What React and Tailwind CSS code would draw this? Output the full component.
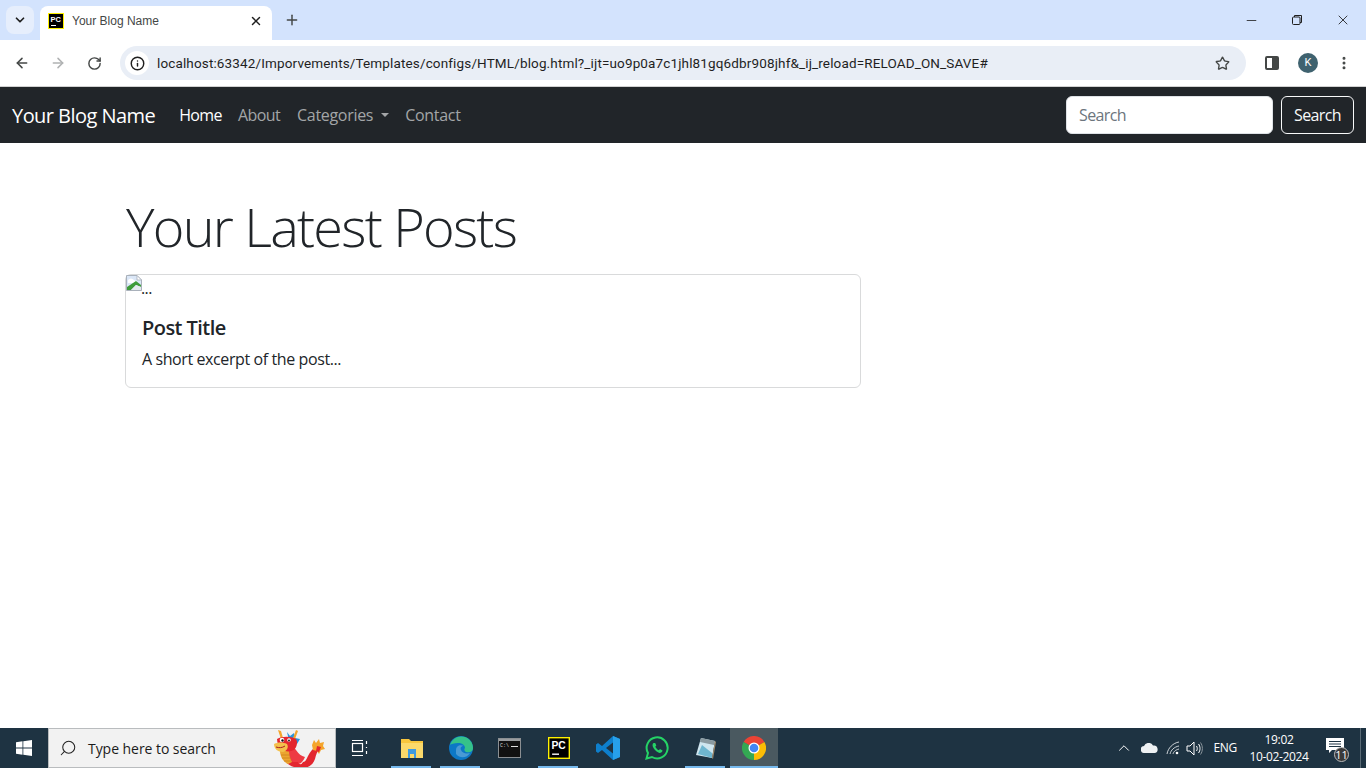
import React from "react";
import { ArrowLeft, ArrowRight, RotateCw, Star, X, Plus, ChevronDown, ChevronUp, Minus, Info, EllipsisVertical, Search } from "lucide-react";

const seg = "font-['Open_Sans','Noto_Sans',sans-serif]";

function Pc({ size = 16, border = "#fff200" }) {
  return (
    <svg width={size} height={size} viewBox="0 0 16 16">
      <rect x="0.5" y="0.5" width="15" height="15" fill="#000" stroke={border} />
      <text x="2.5" y="8.5" fontSize="7.5" fontWeight="700" fill="#fff" fontFamily="Liberation Sans">PC</text>
      <rect x="3" y="12" width="5" height="1" fill="#fff" />
    </svg>
  );
}

function Dragon() {
  return (
    <svg width="52" height="38" viewBox="0 0 52 38">
      {/* tail and body */}
      <path d="M14 21c2 8 6 13 12 14 4 1 7-3 9-8 2-4 5-8 9-10l3 3c-3 2-4 6-5 10-2 6-7 9-13 9-3 0-5 0-8-1-7-2-12-8-12-15z" fill="#e3262f" />
      <path d="M14 20c3-2 7-2 9 1 3 4 5 6 9 7-2 5-5 8-9 7-5-2-9-8-9-15z" fill="#ee3a43" />
      <path d="M39 16l2-5 2 3 3-4 1 4 4-1-1 4 2 3-4 1-2 4-2-3-4-1z" fill="#f4a52c" />
      <path d="M44 17l4 1-2 5-3-1z" fill="#e3262f" />
      {/* belly */}
      <path d="M7 22h9c0 4 1 8 3 11l-4 2c-5-2-8-8-8-13z" fill="#eba531" />
      <path d="M8 26h9M9 29h9M11 32h7" stroke="#c97f1a" strokeWidth="0.7" />
      {/* feet */}
      <path d="M20 33l-3 3h9l-1-3zM30 33l-2 3h8l-2-4z" fill="#e3262f" />
      {/* crest */}
      <path d="M14 3l3 4 4-3 1 5 5 1-3 5-8-3z" fill="#2b93dc" />
      {/* horns */}
      <path d="M5 1l3 1 2 7-2 1zM23 1l2 1-3 8-2-1z" fill="#f4a52c" />
      {/* head */}
      <path d="M4 10c5-3 14-3 19 0 2 3 1 8-2 11-4 2-9 2-12-1-3-2-5-6-5-10z" fill="#e3262f" />
      <path d="M1 15c4-2 9-2 13 0 2 3 0 7-4 8-5 0-9-3-9-8z" fill="#f3c04c" />
      <path d="M3 18c3 1 6 1 9-1" stroke="#a8201e" strokeWidth="1" fill="none" />
      <circle cx="9" cy="11" r="2.300" fill="#fff" />
      <circle cx="9.500" cy="11.500" r="1.200" fill="#111" />
      <circle cx="16" cy="11" r="1.800" fill="#fff" />
      <circle cx="16" cy="11.500" r="0.900" fill="#111" />
    </svg>
  );
}

function TaskApp({ children, active, running = true }) {
  return (
    <div className={`relative h-10 flex items-center justify-center ${active ? "w-12 bg-[#4a5960]" : "w-[49px]"}`}>
      {children}
      {running && <div className={`absolute bottom-0 h-0.5 bg-[#76b9ed] ${active ? "left-0 right-0" : "left-[4px] w-10"}`} />}
    </div>
  );
}

export default function App() {
  return (
    <div className={`h-screen w-full flex flex-col overflow-hidden bg-white ${seg}`}>
      {/* tab strip */}
      <div className="h-10 shrink-0 bg-[#d3e3fd] flex items-end pl-[6px] relative">
        <div className="w-7 h-7 mb-1.5 bg-[#e6eefc] rounded-lg flex items-center justify-center mr-1.5">
          <ChevronDown size={14} strokeWidth={3} color="#1f1f1f" />
        </div>
        <div className="w-[232px] h-[34px] bg-white rounded-t-lg flex items-center pl-[8px] pr-[9px] pb-[5px]">
          <Pc size={16} />
          <span className="ml-2 text-xs text-[#444746] font-['Liberation_Sans',sans-serif]">Your Blog Name</span>
          <X size={14} strokeWidth={2.5} color="#1f1f1f" className="ml-auto" />
        </div>
        <Plus size={16} strokeWidth={2.2} color="#444746" className="ml-[12px] mb-[12px]" />
        <div className="ml-auto flex items-center h-10 self-start text-[#1f1f1f]">
          <div className="w-[46px] flex justify-center"><Minus size={15} strokeWidth={1.3} /></div>
          <div className="w-[46px] flex justify-center">
            <svg width="12" height="12" viewBox="0 0 12 12" fill="none" stroke="#1f1f1f" strokeWidth="1"><rect x="1.5" y="3" width="7.5" height="7.5" rx="1" /><path d="M3.5 3V1.5h7v7H9" /></svg>
          </div>
          <div className="w-[46px] flex justify-center"><X size={16} strokeWidth={1.3} /></div>
        </div>
      </div>
      {/* toolbar */}
      <div className="h-[47px] shrink-0 bg-white rounded-t-lg flex items-center border-b border-[#d1d1d1] pl-[14px] pr-[14px]">
        <ArrowLeft size={16} strokeWidth={2.3} color="#444746" />
        <ArrowRight size={16} strokeWidth={2.3} color="#b0b2b3" className="ml-[20px]" />
        <RotateCw size={15} strokeWidth={2.3} color="#444746" className="ml-[21px]" />
        <div className="ml-[18px] w-[1126px] h-[34px] rounded-full bg-[#e9eef6] flex items-center pl-[5px] pr-[16px]">
          <div className="w-6 h-6 rounded-full bg-white flex items-center justify-center">
            <Info size={15} strokeWidth={2.3} color="#1f1f1f" />
          </div>
          <span className="ml-[8px] text-[13.5px] tracking-[0.14px] text-[#1f1f1f] font-['Roboto',sans-serif]">localhost:63342/Imporvements/Templates/configs/HTML/blog.html?_ijt=uo9p0a7c1jhl81gq6dbr908jhf&amp;_ij_reload=RELOAD_ON_SAVE#</span>
          <Star size={15} strokeWidth={2.2} color="#444746" className="ml-auto" />
        </div>
        <div className="ml-[19px] w-[14px] h-[14px] rounded-[2px] border-2 border-[#444746] flex justify-end">
          <div className="w-[5px] bg-[#444746]" />
        </div>
        <div className="ml-[19px] w-5 h-5 rounded-full bg-[#3f626f] text-white text-[11px] flex items-center justify-center font-['Roboto',sans-serif]">K</div>
        <EllipsisVertical size={16} strokeWidth={2.5} color="#444746" className="ml-[18px]" />
      </div>
      {/* navbar */}
      <nav className="h-14 shrink-0 bg-[#212529] flex items-center pl-3 pr-3">
        <span className="text-[20px] tracking-[-0.55px] text-white pt-px">Your Blog Name</span>
        <div className="ml-6 flex items-center text-base text-[#a3a5a7]">
          <span className="text-white tracking-[-0.6px]">Home</span>
          <span className="ml-4 tracking-[-0.6px]">About</span>
          <span className="ml-[17px] flex items-center tracking-[-0.3px]">Categories
            <span className="ml-2 w-0 h-0 border-x-[4.8px] border-x-transparent border-t-[4.8px] border-t-[#a3a5a7]" />
          </span>
          <span className="ml-4 tracking-[-0.3px]">Contact</span>
        </div>
        <div className="ml-auto flex items-center gap-2 text-base tracking-[-0.6px]">
          <div className="w-[207px] h-[38px] rounded-md bg-white border border-[#dee2e6] flex items-center px-3 text-[#6c757d]">Search</div>
          <div className="w-[73px] h-[38px] rounded-md border border-[#f8f9fa] text-[#f8f9fa] flex items-center justify-center">Search</div>
        </div>
      </nav>
      {/* main */}
      <main className="flex-1 w-[1140px] mx-auto px-3 pt-[50px] text-[#212529]">
        <h1 className="text-[54px] leading-[67px] font-light tracking-[-1.76px] mb-[14px] pl-px">Your Latest Posts</h1>
        <div className="w-[736px] h-[114px] border border-[#d9dadb] rounded-md">
          <div className="flex items-end h-[26px]">
            <svg width="16" height="16" viewBox="0 0 16 16" className="self-start">
              <path d="M0.5 0.5H11L15.5 5V15.5H0.5Z" fill="#dbe7f7" stroke="#a9b1bb" />
              <path d="M11 0.5V5H15.500Z" fill="#fff" stroke="#a9b1bb" strokeWidth="0.8" />
              <path d="M2 5c2-2 4-2 6 0 1 1 2 1 3 1v2H2z" fill="#fff" />
              <path d="M1 15v-3L10 6l5 4v2l-5-2-5 5z" fill="#3e9c3a" />
              <path d="M5 15l5-5 5 2v3z" fill="#e4e9ee" />
            </svg>
            <span className="text-base leading-none tracking-[-0.6px] mb-[5px] -ml-px">...</span>
          </div>
          <div className="pl-4 pt-[15px]">
            <h5 className="text-[20px] leading-6 font-semibold tracking-[-0.55px]">Post Title</h5>
            <p className="mt-[7px] text-base leading-6 tracking-[-0.4px]">A short excerpt of the post...</p>
          </div>
        </div>
      </main>
      {/* taskbar */}
      <div className="h-10 shrink-0 bg-[#1e3342] flex items-center text-white">
        <div className="w-12 h-10 flex items-center justify-center">
          <svg width="16" height="16" viewBox="0 0 16 16" fill="#fff"><path d="M0 2.2l6.5-.9v6.3H0zM7.3 1.2L16 0v7.6H7.3zM0 8.4h6.5v6.3L0 13.8zM7.3 8.4H16V16l-8.7-1.2z" /></svg>
        </div>
        <div className="w-[288px] h-10 bg-[#f2f2f2] border border-[#b9bcbe] flex items-center pl-[10px] relative">
          <Search size={18} strokeWidth={1.4} color="#222" className="-scale-x-100" />
          <span className="ml-[11px] text-[14px] tracking-[-0.05px] text-[#1b1b1b]">Type here to search</span>
          <div className="absolute right-[10px] top-0"><Dragon /></div>
        </div>
        <div className="w-12 h-10 flex items-center justify-center">
          <svg width="18" height="18" viewBox="0 0 18 18" fill="none" stroke="#fff" strokeWidth="1.2"><rect x="1.5" y="4.5" width="10" height="8" /><path d="M1 1.5h11M1 16.5h11M15.5 2v3M15.5 8v1M15.5 12v3" /></svg>
        </div>
        <div className="ml-[3px] flex items-center">
          <TaskApp>
            <svg width="22" height="20" viewBox="0 0 22 20"><path d="M0 1h8l2 2h12v17H0z" fill="#f8c63d" /><path d="M0 5h22v15H0z" fill="#fbd96b" /><path d="M7 11h8v9h-2v-4H9v4H7z" fill="#3f9be0" /></svg>
          </TaskApp>
          <TaskApp>
            <svg width="24" height="24" viewBox="0 0 24 24">
              <circle cx="12" cy="12" r="12" fill="#0c78c6" />
              <path d="M1 9C3 2 10-1 16 1c5 2 8 6 8 11 0 4-4 5-7 4-2-1-2-3-1-4 0-3-3-5-7-5-4 0-7 1-8 2z" fill="#35c28a" />
              <path d="M7 14c0-4 4-6 8-4-3 0-4 2-3 4 1 3 5 4 9 3-3 5-10 6-14 1z" fill="#fff" fillOpacity="0.25" />
            </svg>
          </TaskApp>
          <TaskApp running={false}>
            <svg width="23" height="20" viewBox="0 0 23 20"><rect x="0.5" y="0.5" width="22" height="19" fill="#111" stroke="#8b8f92" /><rect x="1" y="1" width="21" height="2" fill="#9a9d9f" /><text x="2" y="9" fontSize="5" fill="#ddd" fontFamily="Liberation Mono">C:\</text><rect x="13" y="8" width="7" height="1" fill="#ddd" /></svg>
          </TaskApp>
          <TaskApp>
            <Pc size={22} />
          </TaskApp>
          <TaskApp running={false}>
            <svg width="24" height="24" viewBox="0 0 24 24"><path d="M17 0l7 3v18l-7 3L6 14l-4 3-2-1.500V8.500L2 7l4 3z" fill="#0e7fcc" /><path d="M17 0l7 3v18l-7 3z" fill="#27a0ea" /><path d="M17 6.500v11L10 12z" fill="#1e3342" /></svg>
          </TaskApp>
          <TaskApp running={false}>
            <svg width="24" height="24" viewBox="0 0 24 24" fill="none"><path d="M1.500 22.500l1.500-5.500a10.500 10.500 0 1 1 4 4z" stroke="#25d366" strokeWidth="2" /><path d="M8.500 7c-1 1-1.500 2.500 0 5 1.500 2.500 4 4.500 6 5 1.500 0 3-1 3-2.500l-2.500-1.500-1.200 1.200c-1.500-.6-2.800-2-3.500-3.500l1-1.200L10.200 7z" fill="#25d366" /></svg>
          </TaskApp>
          <TaskApp>
            <svg width="24" height="24" viewBox="0 0 24 24"><path d="M7 2l14 3-3 17-16-3z" fill="#cfe6ef" /><path d="M7 2l14 3-1 4L6 6z" fill="#8a9aa0" /><path d="M4 18l4-9 10 8 0 5z" fill="#6fb6cf" /><path d="M21 5l1 1-3 17-1-1z" fill="#a08a6a" /></svg>
          </TaskApp>
          <TaskApp active>
            <svg width="24" height="24" viewBox="0 0 24 24">
              <path d="M12 12 L1.600 6 A12 12 0 0 1 22.400 6 Z" fill="#ea4335" />
              <path d="M12 12 L22.400 6 A12 12 0 0 1 12 24 Z" fill="#fbbc05" />
              <path d="M12 12 L12 24 A12 12 0 0 1 1.600 6 Z" fill="#34a853" />
              <circle cx="12" cy="12" r="5.500" fill="#fff" />
              <circle cx="12" cy="12" r="4.300" fill="#4285f4" />
            </svg>
          </TaskApp>
        </div>
        <div className="ml-auto flex items-center h-10">
          <ChevronUp size={18} strokeWidth={1.3} />
          <svg width="17" height="10" viewBox="0 0 17 10" fill="#eef1f3" className="ml-[8px] mr-[-1px]"><path d="M3.500 10a3.500 3.500 0 0 1-.5-7 5 5 0 0 1 9-.5A3.800 3.800 0 0 1 13.500 10z" /></svg>
          <svg width="14" height="14" viewBox="0 0 14 14" fill="none" stroke="#dfe3e6" strokeWidth="0.9" className="ml-[9px]"><path d="M1 13C2 7 7 2 13 1M4 13c1-4 4-7 9-8M7 13c.5-2 2-4 6-5" /><circle cx="11" cy="12" r="1.300" fill="#fff" stroke="none" /></svg>
          <svg width="17" height="15" viewBox="0 0 17 15" fill="none" stroke="#fff" strokeWidth="1" className="ml-[6px]"><path d="M1 5h3l4-4v13l-4-4H1zM10.500 5c1 1.500 1 3.500 0 5M12.500 3c2 2.500 2 6.500 0 9" /><path d="M14.500 1.500c2.500 3.500 2.500 8.500 0 12" stroke="#8a949b" /></svg>
          <span className="ml-[10px] text-xs tracking-[-0.3px]">ENG</span>
          <div className="ml-[12px] w-[60px] flex flex-col items-center text-[12px] tracking-[-0.35px] leading-[17px]">
            <span>19:02</span>
            <span>10-02-2024</span>
          </div>
          <div className="relative ml-[17px] w-[30px] h-10 flex items-center">
            <svg width="18" height="16" viewBox="0 0 18 16" fill="#fff" className="-mt-1"><path d="M0 0h18v12H6l-3 3v-3H0z" /><path d="M3 3.500h12M3 6h12M3 8.500h12" stroke="#1e3342" strokeWidth="1" /></svg>
            <div className="absolute left-[8px] top-[19px] w-[15px] h-[15px] rounded-full bg-[#3a3a3a] border border-[#bbb] text-[11px] leading-none flex items-center justify-center">11</div>
          </div>
          <div className="w-[6px] h-10 ml-[4px] border-l border-[#5a6b76]" />
        </div>
      </div>
    </div>
  );
}
